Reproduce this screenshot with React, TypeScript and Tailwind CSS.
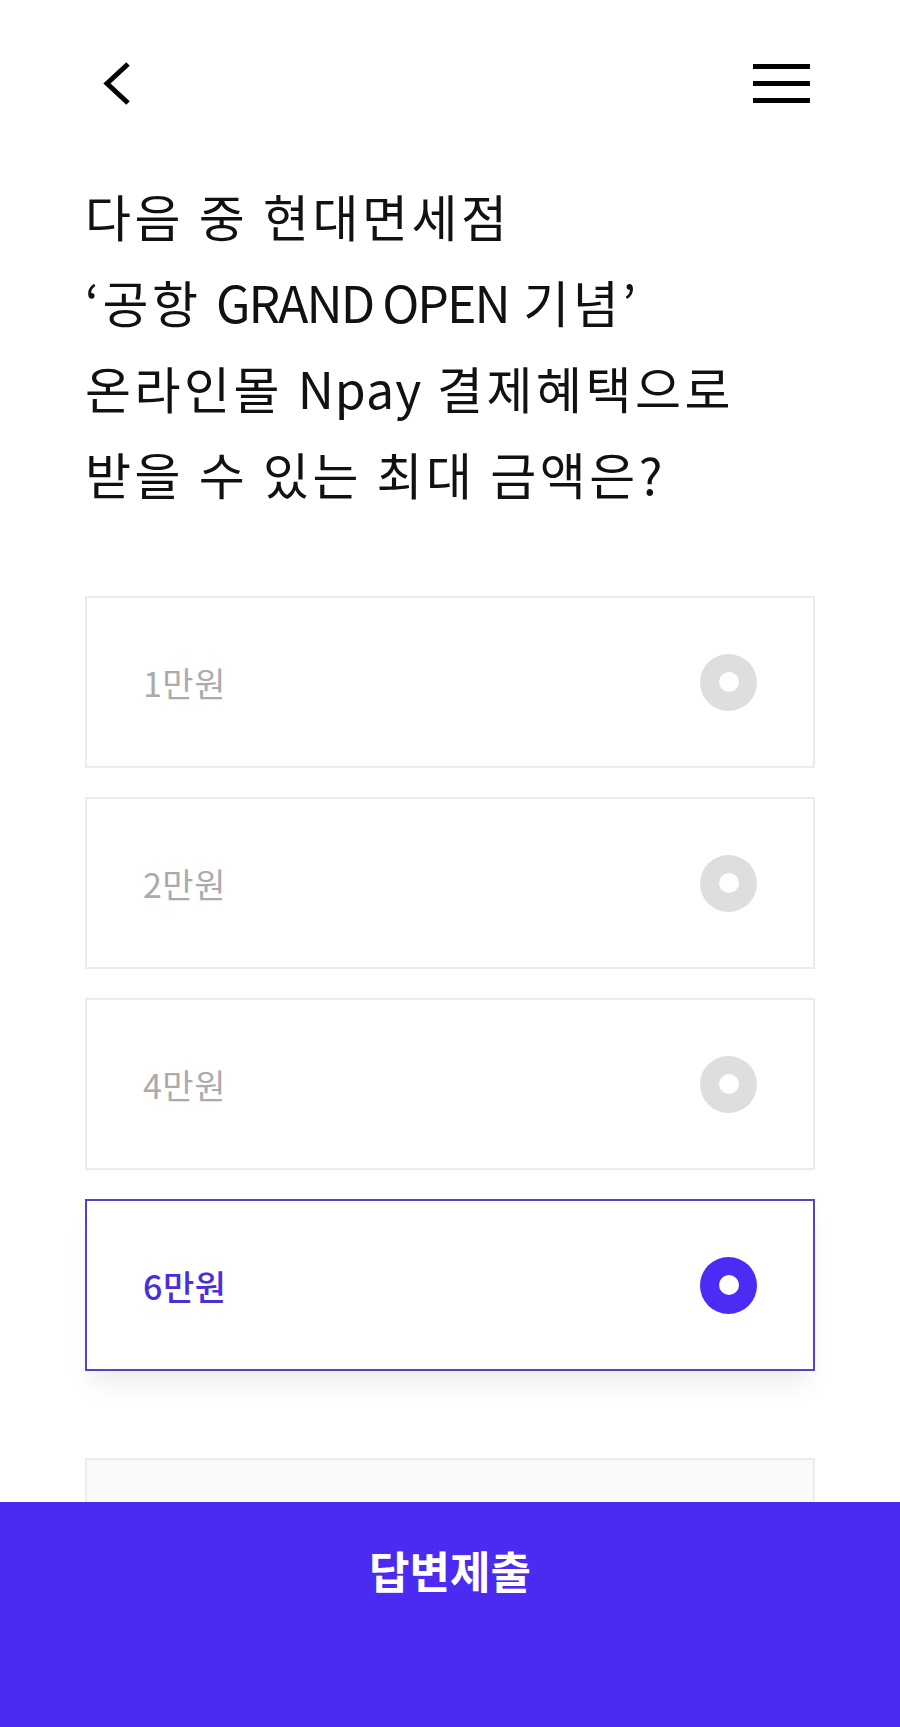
import React, { useState } from "react";

const options = ["1만원", "2만원", "4만원", "6만원"];

export default function App() {
  const [selected, setSelected] = useState(3);

  return (
    <div
      className="relative min-h-[1727px] w-full bg-white text-[#111]"
      style={{ fontFamily: '"Noto Sans CJK KR", "Noto Sans", sans-serif' }}
    >
      {/* header */}
      <div className="flex h-[166px] items-center justify-between pl-[102px] pr-[90px]">
        <button aria-label="back">
          <svg width="30" height="45" viewBox="0 0 30 45" fill="none">
            <polyline points="26,3 5,22.5 26,42" stroke="#000" strokeWidth="5" />
          </svg>
        </button>
        <button aria-label="menu" className="flex flex-col gap-[12px]">
          <span className="block h-[5px] w-[57px] bg-black" />
          <span className="block h-[5px] w-[57px] bg-black" />
          <span className="block h-[5px] w-[57px] bg-black" />
        </button>
      </div>

      {/* question */}
      <h1 className="mt-[6px] px-[85px] text-[50px] font-normal leading-[86px] tracking-[3.5px]">
        다음 중 현대면세점
        <br />
        ‘공항 <span className="tracking-[-2px]">GRAND OPEN</span> 기념’
        <br />
        온라인몰 <span className="tracking-[1px]">Npay</span> 결제혜택으로
        <br />
        받을 수 있는 최대 금액은?
      </h1>

      {/* options */}
      <div className="mt-[80px] flex flex-col gap-[29px] px-[85px]">
        {options.map((label, i) => {
          const active = i === selected;
          return (
            <button
              key={label}
              onClick={() => setSelected(i)}
              className={
                active
                  ? "flex h-[172px] items-center justify-between border-2 border-[#5a40c2] bg-white pl-[56px] pr-[56px] text-left shadow-[0_18px_24px_-6px_rgba(0,0,0,0.08)]"
                  : "flex h-[172px] items-center justify-between border-2 border-[#ececec] bg-white pl-[56px] pr-[56px] text-left"
              }
            >
              <span
                className={
                  active
                    ? "text-[34px] font-medium tracking-[0.5px] text-[#4a2fd6]"
                    : "text-[34px] font-normal tracking-[0.5px] text-[#ababab]"
                }
              >
                {label}
              </span>
              <span
                className={
                  active
                    ? "flex h-[57px] w-[57px] items-center justify-center rounded-full bg-[#4b2cf4]"
                    : "flex h-[57px] w-[57px] items-center justify-center rounded-full bg-[#dedede]"
                }
              >
                <span className="block h-[20px] w-[20px] rounded-full bg-white" />
              </span>
            </button>
          );
        })}

        <div className="mt-[58px] h-[172px] border-2 border-[#ececec] bg-[#fafafa]" />
      </div>

      {/* submit */}
      <button className="fixed bottom-0 left-0 flex h-[225px] w-full items-start justify-center bg-[#4b2bf2] pt-[40px] text-[44px] font-bold leading-[56px] text-white">
        답변제출
      </button>
    </div>
  );
}
